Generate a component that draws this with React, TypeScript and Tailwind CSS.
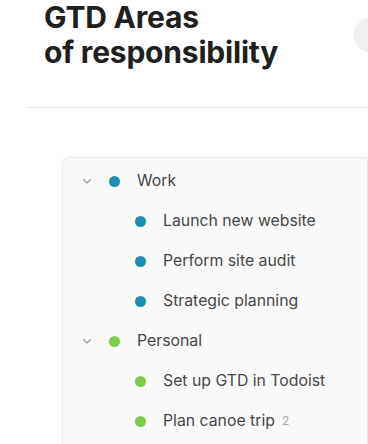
type Row = {
  label: string
  color: string
  parent?: boolean
  count?: number
}

const rows: Row[] = [
  { label: "Work", color: "bg-[#1a8fb1]", parent: true },
  { label: "Launch new website", color: "bg-[#1a8fb1]" },
  { label: "Perform site audit", color: "bg-[#1a8fb1]" },
  { label: "Strategic planning", color: "bg-[#1a8fb1]" },
  { label: "Personal", color: "bg-[#7ecc49]", parent: true },
  { label: "Set up GTD in Todoist", color: "bg-[#7ecc49]" },
  { label: "Plan canoe trip", color: "bg-[#7ecc49]", count: 2 },
]

const Chevron = () => (
  <svg width="12" height="12" viewBox="0 0 12 12" fill="none" className="text-[#9a9a9a]">
    <path d="M2.5 4.5 6 8l3.5-3.5" stroke="currentColor" strokeWidth="1.2" strokeLinecap="round" strokeLinejoin="round" />
  </svg>
)

export default function App() {
  return (
    <div className="relative h-[444px] w-[368px] overflow-hidden bg-white font-['Inter',sans-serif]">
      <div className="absolute left-[354px] top-[17px] h-9 w-9 rounded-full bg-[#f0f0f0]" />
      <h1 className="pl-[44px] text-[30px] font-bold leading-[35px] tracking-[-0.2px] text-[#202020]">
        GTD Areas
        <br />
        of responsibility
      </h1>
      <div className="ml-[27px] mt-[37px] h-px bg-[#e6e6e6]" />
      <div className="ml-[62px] mt-[49px] h-[320px] rounded-l-lg border border-[#ebebeb] bg-[#fafafa] pt-[3px] shadow-[0_1px_6px_rgba(0,0,0,0.05)]">
        {rows.map((r, i) => (
          <div key={i} className={`flex h-10 items-center text-[15.8px] text-[#474747] ${r.parent ? "pl-[18px]" : "pl-[72px]"}`}>
            {r.parent && (
              <span className="mr-[16px] flex w-3 justify-center">
                <Chevron />
              </span>
            )}
            <span className={`h-[11px] w-[11px] rounded-full ${r.color}`} />
            <span className="ml-[17px]">{r.label}</span>
            {r.count && <span className="ml-[7px] text-[12px] text-[#aaa]">{r.count}</span>}
          </div>
        ))}
      </div>
    </div>
  )
}
